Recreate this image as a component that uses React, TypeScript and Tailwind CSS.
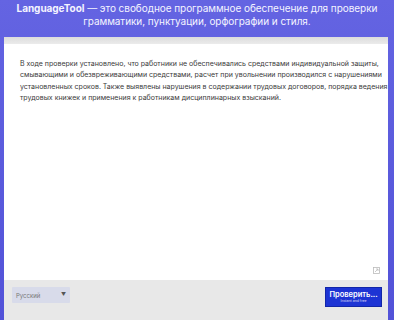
import React from "react";

export default function App() {
  const lines = [
    "В ходе проверки установлено, что работники не обеспечивались средствами индивидуальной защиты,",
    "смывающими и обезвреживающими средствами, расчет при увольнении производился с нарушениями",
    "установленных сроков. Также выявлены нарушения в содержании трудовых договоров, порядка ведения",
    "трудовых книжек и применения к работникам дисциплинарных взысканий.",
  ];
  return (
    <div
      className="w-[394px] h-[320px] overflow-hidden flex flex-col bg-gradient-to-b from-[#6464e2] to-[#5252d8]"
      style={{ fontFamily: "Inter, 'Open Sans', sans-serif" }}
    >
      <div className="h-[37px] flex flex-col items-center pt-[2px] text-[#f4f4ff] text-[10px] leading-[13px] tracking-[-0.05px]">
        <div className="whitespace-nowrap">
          <span className="font-bold">LanguageTool</span> — это свободное программное обеспечение для проверки
        </div>
        <div className="whitespace-nowrap">грамматики, пунктуации, орфографии и стиля.</div>
      </div>
      <div className="ml-[4px] mr-[6px] flex-1 flex flex-col bg-white">
        <div className="h-[7px] bg-gradient-to-b from-[#dcdcdc] to-[#ebebeb]" />
        <div className="flex-1 flex flex-col pl-[16px] pt-[14px] text-[7px] leading-[11.3px] text-[#3a3a3a] relative">
          {lines.map((l, i) => (
            <div key={i} className="whitespace-nowrap">{l}</div>
          ))}
          <svg className="absolute right-[8px] bottom-[6px]" width="7" height="7" viewBox="0 0 7 7">
            <rect x="0.5" y="0.5" width="6" height="6" fill="none" stroke="#bbb" strokeWidth="0.8" />
            <path d="M2 5 L5 2 M3 2 H5 V4" fill="none" stroke="#bbb" strokeWidth="0.8" />
          </svg>
        </div>
        <div className="h-[40px] bg-[#e8e8e8] flex items-start justify-between pl-[8px] pr-[6px] pt-[7px]">
          <div className="w-[58px] h-[16px] bg-[#d8dbea] rounded-[1px] flex items-center justify-between px-[4px] text-[6px] text-[#777]">
            <span>Русский</span>
            <span className="text-[5px] text-[#555]">▼</span>
          </div>
          <div className="w-[57px] h-[20px] bg-[#1d34d4] border border-[#1226a8] flex flex-col items-center justify-center text-white leading-none">
            <span className="text-[7.5px] font-semibold">Проверить...</span>
            <span className="text-[3.5px] mt-[2px] opacity-80">Instant and free</span>
          </div>
        </div>
      </div>
    </div>
  );
}
